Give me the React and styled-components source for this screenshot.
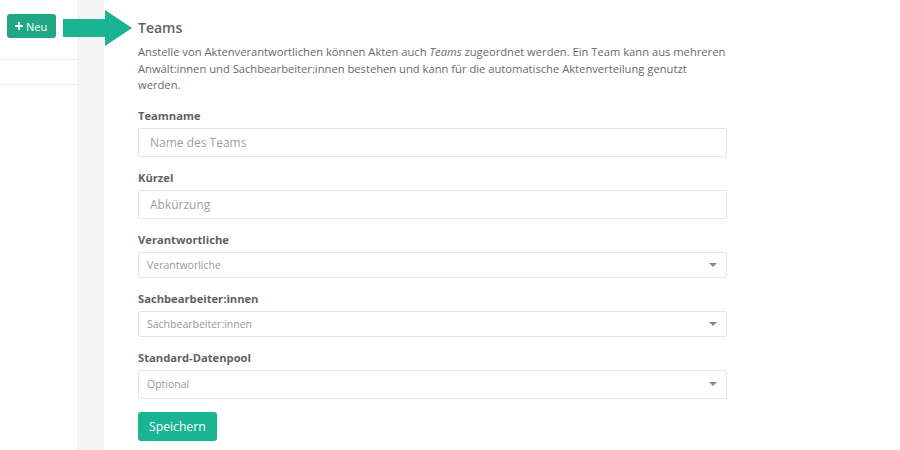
import React from "react";
import styled, { createGlobalStyle } from "styled-components";

const Global = createGlobalStyle`
  html, body { margin: 0; padding: 0; background: #fff; }
  body { font-family: "Open Sans", "Liberation Sans", sans-serif; color: #676a6c; }
  * { box-sizing: border-box; }
`;

const Page = styled.div`
  position: relative;
  display: flex;
  width: 900px;
  height: 450px;
  overflow: hidden;
`;

const Sidebar = styled.aside`
  width: 77px;
  flex: none;
  display: flex;
  flex-direction: column;
`;

const SidebarTop = styled.div`
  padding: 14px 0 0 7px;
  height: 60px;
  border-bottom: 1px solid #ececec;
`;

const SidebarRow = styled.div`
  height: 25px;
  border-bottom: 1px solid #ececec;
`;

const NewButton = styled.button`
  display: flex;
  align-items: center;
  gap: 3px;
  height: 24px;
  width: 49px;
  padding: 0 0 0 8px;
  border: none;
  border-radius: 3px;
  background: #1fa786;
  color: #fff;
  font-family: inherit;
  font-size: 11px;
  font-weight: 400;
`;

const Strip = styled.div`
  width: 27px;
  flex: none;
  background: #f3f3f4;
`;

const Content = styled.main`
  flex: 1;
  padding: 18px 0 0 34px;
  width: 623px;
`;

const Title = styled.h3`
  margin: 0 0 6px;
  font-size: 14px;
  line-height: 20px;
  font-weight: 600;
  color: #5f6264;
`;

const Description = styled.p`
  margin: 0 0 13px;
  width: 589px;
  font-size: 11.2px;
  line-height: 16.6px;
  color: #676a6c;
`;

const Group = styled.div`
  width: 589px;
  margin-bottom: 12px;
`;

const Label = styled.label`
  display: block;
  font-size: 11.2px;
  line-height: 18px;
  font-weight: 700;
  color: #5f6264;
  margin-bottom: 3px;
`;

const TextInput = styled.input`
  display: block;
  width: 100%;
  height: 29px;
  padding: 0 11px;
  border: 1px solid #e5e6e7;
  border-radius: 1px;
  font-family: inherit;
  font-size: 12px;
  color: #676a6c;
  outline: none;
  &::placeholder { color: #a0a0a0; }
`;

const Select = styled.div`
  display: flex;
  align-items: center;
  justify-content: space-between;
  height: ${(p) => p.$h}px;
  padding: 0 9px 0 8px;
  border: 1px solid #e5e6e7;
  border-radius: 2px;
  font-size: 10.5px;
  color: #999;
`;

const Caret = styled.span`
  width: 0;
  height: 0;
  border-left: 4px solid transparent;
  border-right: 4px solid transparent;
  border-top: 4px solid #888;
`;

const SaveButton = styled.button`
  height: 29px;
  padding: 0 11px;
  border: none;
  border-radius: 3px;
  background: #1ab394;
  color: #fff;
  font-family: inherit;
  font-size: 12.2px;
  margin-top: 1px;
`;

const ArrowOverlay = styled.svg`
  position: absolute;
  left: 63px;
  top: 10px;
`;

const selects = [
  { label: "Verantwortliche", text: "Verantworliche", h: 26 },
  { label: "Sachbearbeiter:innen", text: "Sachbearbeiter:innen", h: 26 },
  { label: "Standard-Datenpool", text: "Optional", h: 29 },
];

export default function App() {
  return (
    <Page>
      <Global />
      <Sidebar>
        <SidebarTop>
          <NewButton>
            <svg width="8" height="8" viewBox="0 0 8 8">
              <path d="M4 0v8M0 4h8" stroke="#fff" strokeWidth="1.8" />
            </svg>
            Neu
          </NewButton>
        </SidebarTop>
        <SidebarRow />
      </Sidebar>
      <Strip />
      <Content>
        <Title>Teams</Title>
        <Description>
          Anstelle von Aktenverantwortlichen können Akten auch <i>Teams</i> zugeordnet werden. Ein Team kann aus mehreren
          Anwält:innen und Sachbearbeiter:innen bestehen und kann für die automatische Aktenverteilung genutzt werden.
        </Description>
        <Group>
          <Label>Teamname</Label>
          <TextInput placeholder="Name des Teams" />
        </Group>
        <Group>
          <Label>Kürzel</Label>
          <TextInput placeholder="Abkürzung" />
        </Group>
        {selects.map((s) => (
          <Group key={s.label}>
            <Label>{s.label}</Label>
            <Select $h={s.h}>
              <span>{s.text}</span>
              <Caret />
            </Select>
          </Group>
        ))}
        <SaveButton>Speichern</SaveButton>
      </Content>
      <ArrowOverlay width="70" height="36" viewBox="0 0 70 36">
        <path d="M0 9H42V0L69 18L42 36V27H0Z" fill="#1ab394" />
      </ArrowOverlay>
    </Page>
  );
}
